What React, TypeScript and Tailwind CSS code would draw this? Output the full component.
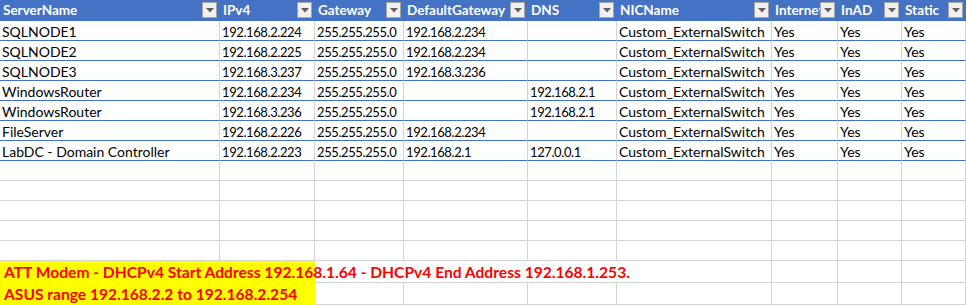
import React from "react";

const cols = ["ServerName", "IPv4", "Gateway", "DefaultGateway", "DNS", "NICName", "Internet", "InAD", "Static"];

const rows: string[][] = [
  ["SQLNODE1", "192.168.2.224", "255.255.255.0", "192.168.2.234", "", "Custom_ExternalSwitch", "Yes", "Yes", "Yes"],
  ["SQLNODE2", "192.168.2.225", "255.255.255.0", "192.168.2.234", "", "Custom_ExternalSwitch", "Yes", "Yes", "Yes"],
  ["SQLNODE3", "192.168.3.237", "255.255.255.0", "192.168.3.236", "", "Custom_ExternalSwitch", "Yes", "Yes", "Yes"],
  ["WindowsRouter", "192.168.2.234", "255.255.255.0", "", "192.168.2.1", "Custom_ExternalSwitch", "Yes", "Yes", "Yes"],
  ["WindowsRouter", "192.168.3.236", "255.255.255.0", "", "192.168.2.1", "Custom_ExternalSwitch", "Yes", "Yes", "Yes"],
  ["FileServer", "192.168.2.226", "255.255.255.0", "192.168.2.234", "", "Custom_ExternalSwitch", "Yes", "Yes", "Yes"],
  ["LabDC - Domain Controller", "192.168.2.223", "255.255.255.0", "192.168.2.1", "127.0.0.1", "Custom_ExternalSwitch", "Yes", "Yes", "Yes"],
];

const gridCols = "grid grid-cols-[220px_95px_89px_124px_89px_155px_66px_64px_64px]";

function FilterButton() {
  return (
    <div className="absolute right-[3px] top-[2px] flex h-[16px] w-[15px] items-center justify-center border border-[#a6a6a6] bg-[#f0f0f0]">
      <svg width="8" height="5" viewBox="0 0 8 5">
        <polygon points="0,0 8,0 4,4.5" fill="#606060" />
      </svg>
    </div>
  );
}

function Cell({ v }: { v: string }) {
  const numeric = /^[\d.]+$/.test(v);
  return (
    <div className="h-[20px] overflow-hidden whitespace-nowrap border-b border-r border-b-[#4472C4] border-r-[#d4d4d4] pl-[2px] leading-[20px]">
      {numeric ? (
        <span className="text-[13px] tracking-[-0.4px] leading-[20px] inline-block pt-[1px]">{v}</span>
      ) : (
        <span className="inline-block pt-[1px]">{v}</span>
      )}
    </div>
  );
}

export default function App() {
  return (
    <div
      className="w-[966px] h-[305px] overflow-hidden bg-white text-[14px] text-black"
      style={{ fontFamily: "Lato, 'Open Sans', sans-serif" }}
    >
      {/* header */}
      <div className={`${gridCols} h-[21px] bg-[#4472C4]`}>
        {cols.map((c) => (
          <div key={c} className="relative h-[21px] overflow-hidden whitespace-nowrap pl-[3px] text-[13.5px] font-bold leading-[21px] text-white">
            {c}
            <FilterButton />
          </div>
        ))}
      </div>
      {/* data rows */}
      {rows.map((r, i) => (
        <div key={i} className={`${gridCols} h-[20px]`}>
          {r.map((v, j) => (
            <Cell key={j} v={v} />
          ))}
        </div>
      ))}
      {/* empty rows */}
      {[0, 1, 2, 3, 4].map((i) => (
        <div key={i} className={`${gridCols} h-[20px]`}>
          {cols.map((c) => (
            <div key={c} className="h-[20px] border-b border-r border-[#d4d4d4]" />
          ))}
        </div>
      ))}
      {/* yellow row 1 */}
      <div className={`${gridCols} h-[22px]`}>
        <div className="relative z-10 col-span-2 h-[22px] whitespace-nowrap bg-[#FFFF00] pl-[4px] text-[15.6px] font-bold leading-[22px] text-[#FF0000]">
          ATT Modem - DHCPv4 Start Address 192.168.1.64 - DHCPv4 End Address 192.168.1.253.
        </div>
        <div className="col-span-4 h-[22px] border-b border-r border-[#d4d4d4]" />
        <div className="h-[22px] border-b border-r border-[#d4d4d4]" />
        <div className="h-[22px] border-b border-r border-[#d4d4d4]" />
        <div className="h-[22px] border-b border-r border-[#d4d4d4]" />
      </div>
      {/* yellow row 2 */}
      <div className={`${gridCols} h-[22px]`}>
        <div className="col-span-2 h-[22px] whitespace-nowrap bg-[#FFFF00] pl-[4px] text-[15.6px] font-bold leading-[22px] text-[#FF0000]">
          ASUS range 192.168.2.2 to 192.168.2.254
        </div>
        {[0, 1, 2, 3, 4, 5, 6].map((i) => (
          <div key={i} className="h-[22px] border-b border-r border-[#d4d4d4]" />
        ))}
      </div>
    </div>
  );
}
